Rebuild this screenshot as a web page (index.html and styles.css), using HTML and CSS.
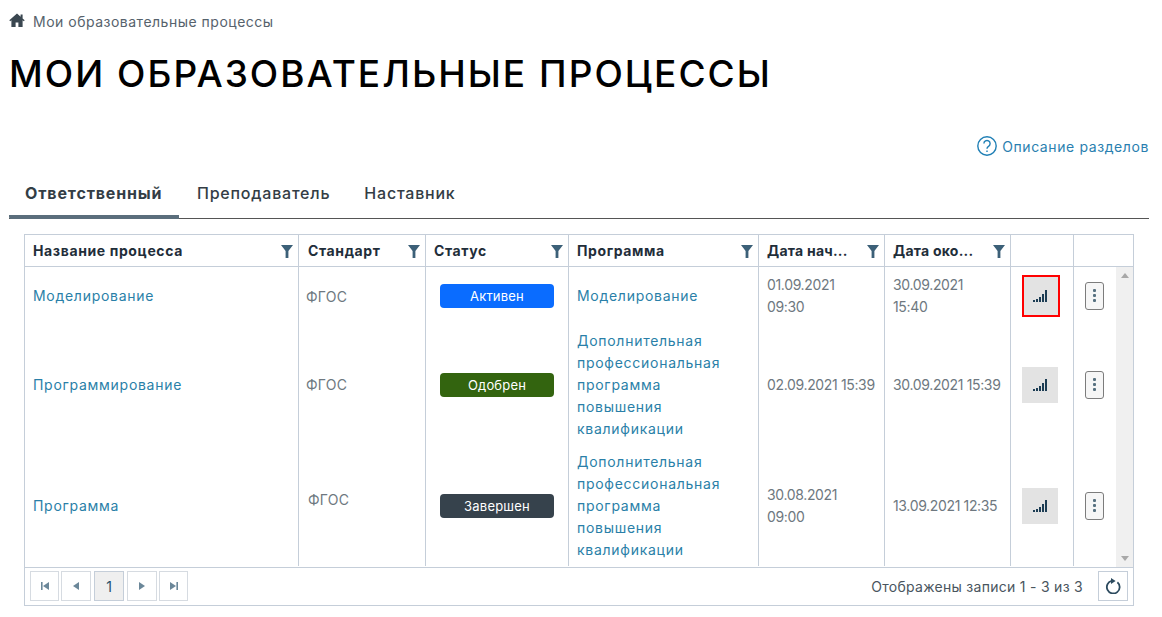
FILE: index.html
```html
<!DOCTYPE html>
<html lang="ru">
<head>
<meta charset="utf-8">
<title>Мои образовательные процессы</title>
<link rel="stylesheet" href="styles.css">
</head>
<body>
<nav class="crumbs">
  <svg class="home" viewBox="0 0 16 14"><path d="M8 .6 .3 7.2l.9 1L2.4 7.2V14h4.2V9.6h2.8V14h4.2V7.2l1.2 1 .9-1-2.1-1.8V1.4h-2v2.3z"/></svg>
  <span>Мои образовательные процессы</span>
</nav>
<h1 class="title">МОИ ОБРАЗОВАТЕЛЬНЫЕ ПРОЦЕССЫ</h1>
<div class="help">
  <svg class="help-icon" viewBox="0 0 20 20"><circle cx="10" cy="10" r="9.2"/><path d="M6.9 7.6a3.1 3.1 0 1 1 4.7 2.7c-1 .6-1.6 1.2-1.6 2.4"/><path d="M10 14.4v1.6"/></svg>
  <span>Описание разделов</span>
</div>
<div class="tabs">
  <div class="tab tab-active">Ответственный</div>
  <div class="tab">Преподаватель</div>
  <div class="tab">Наставник</div>
</div>
<section class="grid">
  <div class="head row">
    <div class="th"><b>Название процесса</b><svg class="funnel" viewBox="0 0 12 13"><path d="M0 0h12L7.4 6v7H4.6V6z"/></svg></div>
    <div class="th th-std"><b>Стандарт</b><svg class="funnel" viewBox="0 0 12 13"><path d="M0 0h12L7.4 6v7H4.6V6z"/></svg></div>
    <div class="th"><b>Статус</b><svg class="funnel" viewBox="0 0 12 13"><path d="M0 0h12L7.4 6v7H4.6V6z"/></svg></div>
    <div class="th"><b>Программа</b><svg class="funnel" viewBox="0 0 12 13"><path d="M0 0h12L7.4 6v7H4.6V6z"/></svg></div>
    <div class="th"><b class="cut">Дата нач...</b><svg class="funnel" viewBox="0 0 12 13"><path d="M0 0h12L7.4 6v7H4.6V6z"/></svg></div>
    <div class="th"><b class="cut">Дата око...</b><svg class="funnel" viewBox="0 0 12 13"><path d="M0 0h12L7.4 6v7H4.6V6z"/></svg></div>
    <div class="th"></div>
    <div class="th"></div>
  </div>
  <div class="body">
    <div class="row row-short">
      <div class="td link"><span>Моделирование</span></div>
      <div class="td muted std std-low"><span>ФГОС</span></div>
      <div class="td center"><span class="badge active">Активен</span></div>
      <div class="td link"><span>Моделирование</span></div>
      <div class="td muted date"><span>01.09.2021<br>09:30</span></div>
      <div class="td muted date"><span>30.09.2021<br>15:40</span></div>
      <div class="td action"><button class="bars selected"><svg viewBox="0 0 14 12"><path d="M0 10h2v2H0zM3 9h2v3H3zM6 7h2v5H6zM9 4h2v8H9zM12 0h2v12h-2z"/></svg></button></div>
      <div class="td action"><button class="kebab"><i></i><i></i><i></i></button></div>
    </div>
    <div class="row row-tall">
      <div class="td link"><span>Программирование</span></div>
      <div class="td muted std"><span>ФГОС</span></div>
      <div class="td center"><span class="badge approved">Одобрен</span></div>
      <div class="td link"><span>Дополнительная<br>профессиональная<br>программа<br>повышения<br>квалификации</span></div>
      <div class="td muted date"><span>02.09.2021 15:39</span></div>
      <div class="td muted date"><span>30.09.2021 15:39</span></div>
      <div class="td action"><button class="bars"><svg viewBox="0 0 14 12"><path d="M0 10h2v2H0zM3 9h2v3H3zM6 7h2v5H6zM9 4h2v8H9zM12 0h2v12h-2z"/></svg></button></div>
      <div class="td action"><button class="kebab"><i></i><i></i><i></i></button></div>
    </div>
    <div class="row row-tall row-last">
      <div class="td link"><span>Программа</span></div>
      <div class="td muted std std-shift"><span>ФГОС</span></div>
      <div class="td center"><span class="badge done">Завершен</span></div>
      <div class="td link"><span>Дополнительная<br>профессиональная<br>программа<br>повышения<br>квалификации</span></div>
      <div class="td muted date"><span>30.08.2021<br>09:00</span></div>
      <div class="td muted date"><span>13.09.2021 12:35</span></div>
      <div class="td action"><button class="bars"><svg viewBox="0 0 14 12"><path d="M0 10h2v2H0zM3 9h2v3H3zM6 7h2v5H6zM9 4h2v8H9zM12 0h2v12h-2z"/></svg></button></div>
      <div class="td action"><button class="kebab"><i></i><i></i><i></i></button></div>
    </div>
    <div class="scrollbar"><span class="arrow-up"></span><span class="arrow-down"></span></div>
  </div>
  <footer class="pager">
    <button class="page"><svg viewBox="0 0 8 8"><path d="M0 0h1.6v8H0zM8 0v8L2 4z"/></svg></button>
    <button class="page page-prev"><svg viewBox="0 0 8 8"><path d="M7 0v8L1 4z"/></svg></button>
    <button class="page page-current">1</button>
    <button class="page page-next"><svg viewBox="0 0 8 8"><path d="M1 0v8l6-4z"/></svg></button>
    <button class="page"><svg viewBox="0 0 8 8"><path d="M0 0v8l6-4zM6.4 0H8v8H6.4z"/></svg></button>
    <span class="info">Отображены записи 1 - 3 из 3</span>
    <button class="page refresh"><svg viewBox="0 0 16 16"><path class="arc" d="M12.4 4.2A6.4 6.4 0 1 1 6.6 2.9"/><path class="tip" d="M6 0v6l4.6-3z"/></svg></button>
  </footer>
</section>
</body>
</html>
```
FILE: styles.css
```css
* { box-sizing: border-box; }
html, body { margin: 0; padding: 0; }
body {
  width: 1162px;
  height: 617px;
  overflow: hidden;
  background: #fff;
  font-family: Inter, "Noto Sans", sans-serif;
  font-size: 14px;
  color: #33414c;
}
button { font-family: inherit; padding: 0; cursor: pointer; }
.crumbs {
  display: flex;
  align-items: center;
  height: 20px;
  margin: 11px 0 0 9px;
  color: #56626c;
  letter-spacing: .5px;
}
.home { width: 16px; height: 14px; margin: -2px 8px 0 0; fill: #3a4750; }
.title {
  margin: 18px 0 0 9px;
  height: 50px;
  font-size: 37px;
  line-height: 50px;
  font-weight: 500;
  color: #000;
  letter-spacing: 2.03px;
  white-space: nowrap;
}
.help {
  display: flex;
  justify-content: flex-end;
  align-items: center;
  height: 22px;
  margin: 36px 13px 0 0;
  color: #2a7fb0;
  letter-spacing: .6px;
}
.help-icon { width: 20px; height: 20px; margin-right: 5px; fill: none; stroke: #1f7fb5; stroke-width: 1.4; }
.tabs {
  display: flex;
  height: 46px;
  margin: 16px 13px 0 9px;
  border-bottom: 1px solid #555;
}
.tab {
  height: 46px;
  padding: 0 17px;
  line-height: 40px;
  font-size: 16px;
  font-weight: 500;
  color: #333d45;
  letter-spacing: .78px;
}
.tab-active {
  width: 170px;
  padding: 0 0 0 16px;
  margin-right: 1px;
  font-weight: 700;
  letter-spacing: .85px;
  border-bottom: 4px solid #5b6e7c;
  border-radius: 0 0 0 2px;
}
.grid {
  width: 1110px;
  height: 372px;
  margin: 15px 0 0 24px;
  border: 1px solid #c5ced9;
}
.row {
  display: grid;
  grid-template-columns: 274px 127px 143px 190px 126px 126px 63px 59px;
}
.head { height: 32px; border-bottom: 1px solid #c5ced9; }
.th {
  display: flex;
  align-items: center;
  justify-content: space-between;
  padding: 0 5px 0 8px;
  border-right: 1px solid #c5ced9;
  color: #1f2e3a;
  font-size: 14px;
  letter-spacing: .62px;
}
.th-std { padding-left: 9px; }
.th:last-child { border-right: 0; }
.th b { font-weight: 700; white-space: nowrap; }
.th .cut { letter-spacing: .25px; }
.funnel { width: 12px; height: 13px; fill: #3c6078; margin-top: 2px; }
.body { position: relative; height: 300px; }
.row-short { height: 57px; }
.row-tall { height: 121px; }
.row-last { height: 122px; padding-bottom: 1px; }
.td {
  display: flex;
  flex-direction: column;
  justify-content: center;
  padding: 0 8px;
  border-right: 1px solid #c5ced9;
  line-height: 22px;
  font-size: 14px;
  letter-spacing: .72px;
}
.td:last-child { border-right: 0; }
.link { color: #2a7fa8; }
.muted { color: #6e7880; letter-spacing: .22px; }
.date { letter-spacing: -.35px; white-space: nowrap; }
.std { padding-left: 7px; }
.std-low { padding-top: 2px; }
.std-shift { padding-left: 9px; padding-bottom: 12px; }
.center { align-items: center; padding: 0; }
.badge {
  width: 114px;
  height: 24px;
  border-radius: 4px;
  color: #fff;
  text-align: center;
  font-size: 13px;
  line-height: 24px;
  letter-spacing: .2px;
}
.active { background: #0a6cff; }
.approved { background: #33640f; }
.done { background: #36424c; }
.action { flex-direction: row; justify-content: flex-start; align-items: center; padding: 0 0 0 11px; }
.bars {
  display: flex;
  align-items: center;
  justify-content: center;
  width: 36px;
  height: 36px;
  border: 0;
  background: #e3e3e3;
}
.bars svg { width: 14px; height: 12px; fill: #1c3d54; }
.bars.selected { width: 38px; height: 42px; border: 2px solid #ff0000; padding-right: 2px; }
.kebab {
  display: flex;
  flex-direction: column;
  align-items: center;
  justify-content: center;
  gap: 2px;
  width: 19px;
  height: 28px;
  border: 1px solid #7c7c7c;
  border-radius: 3px;
  background: #f6f6f6;
}
.kebab i { width: 3px; height: 3px; background: #56707f; border-radius: 1px; }
.scrollbar {
  position: absolute;
  top: 0;
  right: 0;
  bottom: 0;
  width: 17px;
  background: #f0f0f0;
  display: flex;
  flex-direction: column;
  justify-content: space-between;
  align-items: center;
  padding: 6px 0;
}
.arrow-up { border: 4px solid transparent; border-top: 0; border-bottom: 5px solid #a8a8a8; }
.arrow-down { border: 4px solid transparent; border-bottom: 0; border-top: 5px solid #a8a8a8; }
.pager {
  display: flex;
  align-items: center;
  height: 38px;
  padding: 0 5px 1px;
  border-top: 1px solid #c5ced9;
}
.page {
  display: flex;
  align-items: center;
  justify-content: center;
  width: 29px;
  height: 30px;
  margin-right: 2px;
  background: #fff;
  border: 1px solid #d6dbe1;
  color: #24506a;
  font-size: 14px;
}
.page svg { width: 8px; height: 8px; fill: #6b8799; }
.page-prev, .page-next { width: 30px; }
.page-prev { margin-right: 3px; }
.page-current { width: 30px; margin-right: 3px; background: #efefef; border-color: #c5ced9; }
.info { margin-left: auto; margin-right: 15px; color: #49555e; letter-spacing: .28px; }
.refresh { width: 30px; margin-right: 0; border-color: #c5ced9; }
.refresh svg { width: 16px; height: 16px; }
.arc { fill: none; stroke: #2c4a5e; stroke-width: 1.8; }
.tip { fill: #2c4a5e; }
```
